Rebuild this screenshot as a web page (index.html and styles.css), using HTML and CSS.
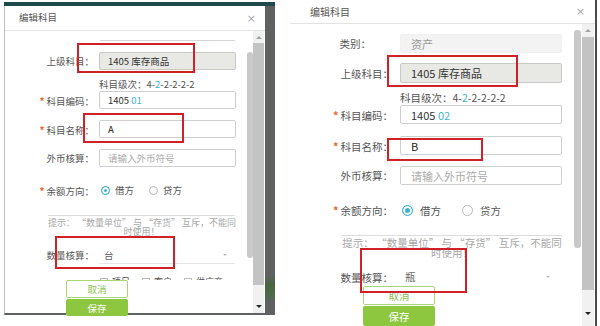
FILE: index.html
```html
<!DOCTYPE html>
<html lang="zh-CN">
<head>
    <meta charset="UTF-8">
    <title>编辑科目</title>
    <link rel="stylesheet" href="styles.css">
</head>
<body>

<div class="page">
    <!-- left capture -->
    <div class="shot shot-a">
        <div class="topbar"></div>
        <div class="frame">
            <div class="dialog">
                <div class="dlg-head">
                    <span>编辑科目</span>
                    <span class="dlg-close">×</span>
                </div>
                <div class="dlg-body">
                    <div class="dlg-main">
                        <div class="dlg-content">
                            <div class="field-cut"></div>
                            <div class="row r-parent">
                                <span class="lbl">上级科目：</span>
                                <span class="box box-grey">1405 库存商品</span>
                            </div>
                            <div class="level">科目级次：4-<em>2</em>-2-2-2-2</div>
                            <div class="row r-code">
                                <span class="lbl"><i class="req">*</i>科目编码：</span>
                                <span class="box">1405 <em>01</em></span>
                            </div>
                            <div class="row r-name">
                                <span class="lbl"><i class="req">*</i>科目名称：</span>
                                <span class="box box-strong">A</span>
                            </div>
                            <div class="row r-cur">
                                <span class="lbl">外币核算：</span>
                                <span class="box box-ph">请输入外币符号</span>
                            </div>
                            <div class="row r-dir">
                                <span class="lbl"><i class="req">*</i>余额方向：</span>
                                <span class="radios">
                                    <span class="radio on"></span>借方
                                    <span class="radio"></span>贷方
                                </span>
                            </div>
                            <div class="divider"></div>
                            <div class="hint">提示： “数量单位” 与 “存货” 互斥，不能同<br>时使用！</div>
                            <div class="row r-qty">
                                <span class="lbl">数量核算：</span>
                                <span class="select">台<span class="caret"></span></span>
                            </div>
                            <div class="checks">
                                <span class="chk"><span class="sq"></span>项目</span>
                                <span class="chk"><span class="sq"></span>客户</span>
                                <span class="chk"><span class="sq"></span>供应商</span>
                            </div>
                        </div>
                        <div class="dlg-foot">
                            <button class="btn btn-cancel">取消</button>
                            <button class="btn btn-save">保存</button>
                        </div>
                    </div>
                    <div class="inner-bar"><div class="inner-thumb"></div></div>
                    <div class="vscroll">
                        <div class="arrow arrow-up"></div>
                        <div class="vthumb"></div>
                        <div class="arrow arrow-down"></div>
                    </div>
                </div>
            </div>
            <div class="backdrop"></div>
        </div>
        <div class="mark mark-1"></div>
        <div class="mark mark-2"></div>
        <div class="mark mark-3"></div>
    </div>

    <!-- right capture -->
    <div class="shot shot-b">
        <div class="dialog">
            <div class="dlg-head">
                <span>编辑科目</span>
                <span class="dlg-close">×</span>
            </div>
            <div class="dlg-body">
                <div class="dlg-main">
                    <div class="dlg-content">
                        <div class="row r-type">
                            <span class="lbl lbl-type">类别：</span>
                            <span class="box box-flat">资产</span>
                        </div>
                        <div class="row r-parent">
                            <span class="lbl">上级科目：</span>
                            <span class="box box-grey">1405 库存商品</span>
                        </div>
                        <div class="level">科目级次：4-<em>2</em>-2-2-2-2</div>
                        <div class="row r-code">
                            <span class="lbl"><i class="req">*</i>科目编码：</span>
                            <span class="box">1405 <em>02</em></span>
                        </div>
                        <div class="row r-name">
                            <span class="lbl"><i class="req">*</i>科目名称：</span>
                            <span class="box box-strong">B</span>
                        </div>
                        <div class="row r-cur">
                            <span class="lbl">外币核算：</span>
                            <span class="box box-ph">请输入外币符号</span>
                        </div>
                        <div class="row r-dir">
                            <span class="lbl"><i class="req">*</i>余额方向：</span>
                            <span class="radios">
                                <span class="radio on"></span>借方
                                <span class="radio"></span>贷方
                            </span>
                        </div>
                        <div class="divider"></div>
                        <div class="hint">提示： “数量单位” 与 “存货” 互斥，不能同<br>时使用！</div>
                        <div class="row r-qty">
                            <span class="lbl">数量核算：</span>
                            <span class="select">瓶<span class="caret"></span></span>
                        </div>
                    </div>
                    <div class="dlg-foot">
                        <button class="btn btn-cancel">取消</button>
                        <button class="btn btn-save">保存</button>
                    </div>
                </div>
                <div class="inner-bar"><div class="inner-thumb"></div></div>
                <div class="vscroll">
                    <div class="arrow arrow-up"></div>
                    <div class="vthumb"></div>
                    <div class="arrow arrow-down"></div>
                </div>
            </div>
        </div>
        <div class="mark mark-1"></div>
        <div class="mark mark-2"></div>
        <div class="mark mark-3"></div>
    </div>
</div>

</body>
</html>
```

FILE: styles.css
```css
body {
    margin: 0;
    background: #fff;
    font-family: "Noto Sans CJK SC", "Liberation Sans", sans-serif;
    color: #555;
}
.page {
    display: flex;
    align-items: flex-start;
    width: 600px;
    height: 326px;
    overflow: hidden;
}
.shot {
    position: relative;
}
.shot-a {
    margin: 2px 0 0 4px;
    width: 271px;
}
.shot-b {
    margin-left: 15px;
    width: 307px;
    height: 326px;
}
.topbar {
    height: 4px;
    background: #1f4a4b;
}
.frame {
    display: flex;
    height: 309px;
}
.backdrop {
    width: 10px;
    background: linear-gradient(#5d6161 0, #5d6161 270px, #48643f 278px, #4e6a48 288px, #5d6161 296px);
}

/* dialog */
.dialog {
    background: #fff;
    display: flex;
    flex-direction: column;
}
.shot-a .dialog {
    width: 260px;
    border-left: 1px solid #bdbdbd;
    border-bottom: 2px solid #5f6363;
}
.shot-b .dialog {
    width: 305px;
    height: 326px;
    border-right: 2px solid #4a4a4a;
}
.dlg-head {
    display: flex;
    justify-content: space-between;
    align-items: center;
    border-bottom: 1px solid #e3e3e3;
    color: #555;
    line-height: 1;
}
.shot-a .dlg-head {
    height: 24px;
    padding: 0 9px 0 14px;
    font-size: 9.5px;
}
.shot-b .dlg-head {
    height: 23px;
    padding: 0 10px 0 20px;
    font-size: 10px;
}
.dlg-close {
    color: #aaa;
    font-family: "DejaVu Sans", sans-serif;
    font-size: 11px;
}
.dlg-body {
    display: flex;
    flex: 1;
    min-height: 0;
}
.dlg-main {
    flex: 1;
    display: flex;
    flex-direction: column;
    min-width: 0;
}
.dlg-content {
    flex: 1;
    overflow: hidden;
}
.shot-a .dlg-foot {
    height: 33px;
    padding-left: 61px;
}
.shot-b .dlg-foot {
    height: 40px;
    padding: 1px 0 0 73px;
}

/* scrollbars */
.inner-bar {
    display: flex;
    justify-content: center;
}
.inner-thumb {
    background: #c9c9c9;
    border-radius: 3px;
}
.shot-a .inner-bar { width: 7px; }
.shot-a .inner-thumb { width: 6px; height: 206px; margin-top: 21px; }
.shot-b .inner-bar { width: 9px; }
.shot-b .inner-thumb { width: 7px; height: 218px; margin-top: 6px; }
.vscroll {
    display: flex;
    flex-direction: column;
    background: #f1f1f1;
}
.shot-a .vscroll { width: 11px; margin-right: 1px; }
.shot-b .vscroll { width: 12px; margin-right: 1px; }
.vthumb {
    background: #c3c3c3;
}
.shot-a .vthumb { height: 242px; }
.shot-b .vthumb { height: 253px; }
.arrow {
    display: flex;
    justify-content: center;
    align-items: center;
    height: 12px;
}
.shot-b .arrow-up { height: 13px; }
.arrow::before {
    content: "";
    border-left: 3px solid transparent;
    border-right: 3px solid transparent;
}
.arrow-up::before {
    border-bottom: 3px solid #a3a3a3;
}
.arrow-down {
    margin-top: auto;
}
.arrow-down::before {
    border-top: 3px solid #222;
}
.shot-a .arrow-down { margin-bottom: 1px; }
.shot-b .arrow-down { margin-bottom: 7px; }

/* form */
.row {
    display: flex;
    align-items: center;
}
.lbl {
    text-align: right;
    white-space: nowrap;
    color: #555;
}
.req {
    font-style: normal;
    color: #e8692e;
    font-weight: bold;
    margin-right: 2px;
}
.box {
    box-sizing: border-box;
    display: flex;
    align-items: center;
    border: 1px solid #cfcfcf;
    border-radius: 2px;
    color: #333;
    white-space: pre;
}
.box em, .level em {
    font-style: normal;
    color: #3cb5c9;
}
.box-grey {
    background: #e8e8e4;
    border-color: #c9c9c5;
}
.box-flat {
    background: #f3f3f3;
    border-color: #f0f0f0;
    color: #999;
}
.box-ph {
    color: #aaa;
}
.box-strong {
    color: #222;
}
.level {
    color: #555;
    white-space: nowrap;
}
.radios {
    display: flex;
    align-items: center;
    color: #555;
}
.radio {
    box-sizing: border-box;
    border: 1px solid #b5b5b5;
    border-radius: 50%;
    background: #fff;
}
.radio.on {
    border-color: #3cb5c9;
    background: #3cb5c9;
    box-shadow: inset 0 0 0 2px #fff;
}
.divider {
    border-top: 1px solid #dcdcdc;
}
.hint {
    color: #a8a8a8;
    text-align: center;
    white-space: nowrap;
}
.select {
    box-sizing: border-box;
    display: flex;
    align-items: center;
    justify-content: space-between;
    border-bottom: 1px solid #e6e6e6;
    color: #666;
}
.caret {
    border-left: 2px solid transparent;
    border-right: 2px solid transparent;
    border-top: 2px solid #bbb;
}
.checks {
    display: flex;
    color: #555;
}
.chk {
    display: flex;
    align-items: center;
}
.sq {
    width: 6px;
    height: 6px;
    border: 1px solid #bbb;
    margin-right: 5px;
}
.btn {
    display: block;
    box-sizing: border-box;
    padding: 0;
    font-family: inherit;
    border-radius: 2px;
}
.btn-cancel {
    background: #fff;
    border: 1px solid #a9d672;
    color: #8cc350;
}
.btn-save {
    background: #8dc63f;
    border: 1px solid #8dc63f;
    color: #fff;
    margin-top: 1px;
}

/* left capture sizes */
.shot-a .row, .shot-a .level, .shot-a .hint, .shot-a .checks { font-size: 9.5px; }
.shot-a .lbl { width: 89px; margin-right: 5px; }
.shot-a .box { width: 137px; height: 18px; padding-left: 8px; }
.shot-a .req { font-size: 10px; }
.shot-a .field-cut { height: 9px; width: 135px; margin-left: 95px; border-bottom: 1px solid #d5d5d5; }
.shot-a .r-parent { margin-top: 11px; }
.shot-a .level { margin: 8px 0 0 94px; line-height: 12px; }
.shot-a .r-code { margin-top: 1px; }
.shot-a .r-name { margin-top: 11px; }
.shot-a .r-cur { margin-top: 11px; }
.shot-a .r-dir { margin-top: 14px; height: 18px; }
.shot-a .radio { width: 9px; height: 9px; margin: 0 5px 0 2px; }
.shot-a .radios .radio:last-child { margin-left: 15px; }
.shot-a .divider { margin: 16px 0 0 43px; width: 187px; }
.shot-a .hint { margin: 2px 0 0 43px; width: 187px; line-height: 9px; font-size: 9px; }
.shot-a .r-qty { margin-top: 10px; }
.shot-a .select { width: 136px; height: 18px; padding: 0 8px 0 5px; }
.shot-a .checks { margin: 12px 0 0 95px; gap: 12px; line-height: 11px; font-size: 9px; }
.shot-a .sq { margin-right: 4px; }
.shot-a .btn { width: 62px; height: 18px; font-size: 9.5px; }
.shot-a .btn-save { height: 17px; }

/* right capture sizes */
.shot-b .row, .shot-b .level { font-size: 10.5px; }
.shot-b .lbl { width: 103px; margin-right: 7px; }
.shot-b .lbl-type { padding-right: 22px; box-sizing: border-box; }
.shot-b .box { width: 162px; height: 19px; padding-left: 10px; font-size: 11px; }
.shot-b .req { font-size: 11px; }
.shot-b .r-type { margin-top: 10px; }
.shot-b .r-parent { margin-top: 10px; }
.shot-b .r-parent .box { height: 20px; }
.shot-b .level { margin: 8px 0 0 110px; line-height: 14px; }
.shot-b .r-code { margin-top: 0; }
.shot-b .r-name { margin-top: 12px; }
.shot-b .r-cur { margin-top: 11px; }
.shot-b .r-dir { margin-top: 16px; height: 18px; }
.shot-b .radio { width: 11px; height: 11px; margin: 0 7px 0 2px; }
.shot-b .radios .radio:last-child { margin-left: 21px; }
.shot-b .divider { margin: 16px 0 0 52px; width: 220px; }
.shot-b .hint { margin: 2px 0 0 52px; width: 220px; line-height: 10px; font-size: 10.5px; }
.shot-b .r-qty { margin-top: 10px; height: 18px; }
.shot-b .select { width: 156px; height: 18px; padding: 0 6px 0 5px; border-bottom-color: transparent; }
.shot-b .btn { width: 72px; height: 19px; font-size: 10.5px; }
.shot-b .btn-save { height: 20px; }

/* red annotation boxes */
.mark {
    position: absolute;
    border: 2px solid #d02028;
    box-sizing: border-box;
}
.shot-a .mark-1 { left: 73px; top: 41px; width: 118px; height: 30px; }
.shot-a .mark-2 { left: 79px; top: 111px; width: 101px; height: 30px; }
.shot-a .mark-3 { left: 51px; top: 234px; width: 120px; height: 33px; }
.shot-b .mark-1 { left: 97px; top: 55px; width: 131px; height: 32px; }
.shot-b .mark-2 { left: 97px; top: 138px; width: 96px; height: 23px; }
.shot-b .mark-3 { left: 70px; top: 248px; width: 107px; height: 45px; }
```
